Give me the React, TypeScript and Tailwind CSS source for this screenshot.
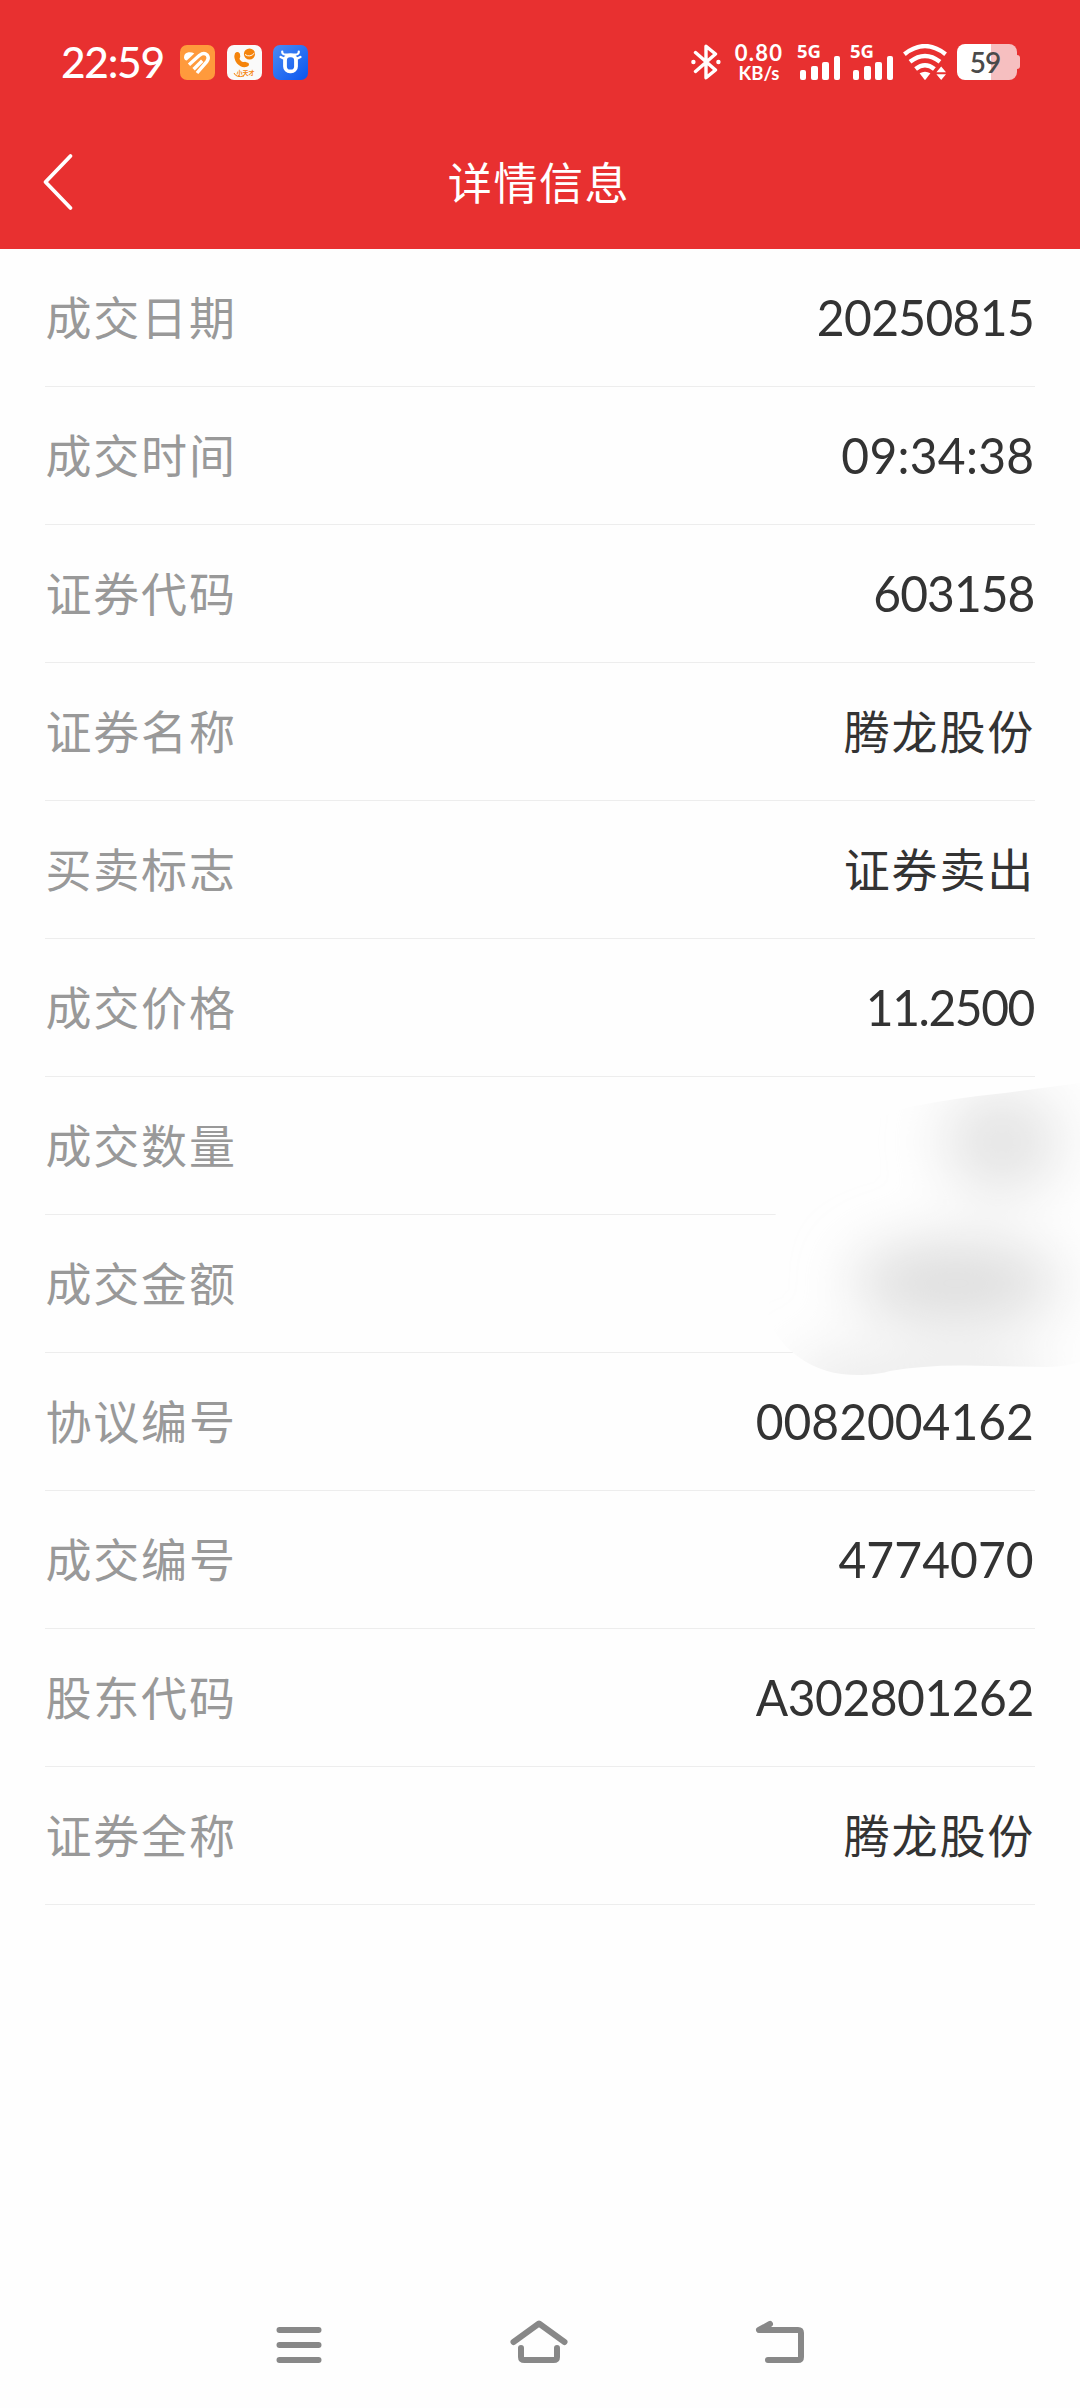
interface DetailRow {
  label: string;
  value: string;
  tracking: string;
}

const NUM = "font-[Lato,'Noto_Sans_CJK_SC',sans-serif] text-[51px] origin-right scale-x-[0.94] -translate-x-px -translate-y-px";
const CJK = "font-['Noto_Sans_CJK_SC',sans-serif] text-[46px] tracking-[1.8px] -translate-y-[3px]";

const rows: DetailRow[] = [
  { label: '成交日期', value: '20250815', tracking: 'tracking-[-0.7px]' },
  { label: '成交时间', value: '09:34:38', tracking: 'tracking-[0.3px]' },
  { label: '证券代码', value: '603158', tracking: 'tracking-[-1px]' },
  { label: '证券名称', value: '腾龙股份', tracking: '' },
  { label: '买卖标志', value: '证券卖出', tracking: '' },
  { label: '成交价格', value: '11.2500', tracking: 'tracking-[-1.5px]' },
  { label: '成交数量', value: '', tracking: '' },
  { label: '成交金额', value: '', tracking: '' },
  { label: '协议编号', value: '0082004162', tracking: 'tracking-[0px]' },
  { label: '成交编号', value: '4774070', tracking: 'tracking-[0.1px]' },
  { label: '股东代码', value: 'A302801262', tracking: 'tracking-[-0.5px]' },
  { label: '证券全称', value: '腾龙股份', tracking: '' },
];

const HeartAppIcon = () => (
  <svg width="35" height="35" viewBox="0 0 35 35">
    <rect width="35" height="35" rx="7" fill="#ff9a3c" />
    <path d="M4 13 Q3.800 8 8.500 7.200 Q12 6.800 14.300 8.600 L6.800 15.600 Q4.600 15.500 4 13Z" fill="#fff" />
    <g fill="none" stroke="#fff" strokeWidth="3.4" strokeLinejoin="round">
      <path d="M9 19.800 L19.500 10.300 Q24 7 27.200 10 Q29.600 13.200 26.800 16.600 L17 28" />
      <path d="M13.600 24.200 L22.200 15.800" />
    </g>
  </svg>
);

const PhoneAppIcon = () => (
  <svg width="35" height="35" viewBox="0 0 35 35">
    <rect width="35" height="35" rx="7" fill="#fafafa" />
    <circle cx="22.5" cy="9" r="5.6" fill="#f5840c" />
    <path d="M18 9.5 Q23 13 27.5 8" stroke="#fff" strokeWidth="1" fill="none" />
    <path
      d="M8 8.200 Q10.500 5.800 12.800 8.500 L13.300 11.500 Q11.800 13.500 13.600 15.600 Q15.500 17.800 18 16.800 L21.500 18 Q23 20.500 20 21.800 Q14.500 23.400 10 18.500 Q6 13 8 8.200Z"
      fill="#f5840c"
    />
    <path d="M7 28 Q9 33 17 31" stroke="#f5840c" strokeWidth="1" fill="none" />
    <text x="9.5" y="29.6" fontSize="6" fontWeight="700" fill="#f5840c" fontFamily="Noto Sans CJK SC, sans-serif">
      小天才
    </text>
  </svg>
);

const BullAppIcon = () => (
  <svg width="35" height="35" viewBox="0 0 35 35">
    <defs>
      <linearGradient id="bull" x1="0" y1="0" x2="1" y2="1">
        <stop offset="0" stopColor="#4a8cf5" />
        <stop offset="1" stopColor="#0a55ee" />
      </linearGradient>
    </defs>
    <rect width="35" height="35" rx="7" fill="url(#bull)" />
    <g fill="none" stroke="#fff" strokeLinecap="round" strokeLinejoin="round">
      <rect x="12" y="10.4" width="11" height="16" rx="5" strokeWidth="3.8" />
      <path d="M9.200 6.500 Q9 9.400 12.500 9.600 H22.500 Q26 9.400 25.800 6.500" strokeWidth="2.2" />
      <path d="M7.600 12 L11 13.600 M27.400 12 L24 13.600" strokeWidth="2.400" />
    </g>
  </svg>
);

const BluetoothIcon = () => (
  <svg width="30" height="36" viewBox="0 0 30 36">
    <path
      d="M4.5 8.500 L24.5 26 L15 33.8 V2.200 L24.5 10 L4.5 27.500"
      fill="none"
      stroke="#fff"
      strokeWidth="3.4"
      strokeLinecap="round"
      strokeLinejoin="round"
    />
    <circle cx="2.4" cy="18" r="2.2" fill="#fff" />
    <circle cx="27.4" cy="18" r="2.2" fill="#fff" />
  </svg>
);

const Signal = () => (
  <div className="relative flex h-9 w-[42px] items-end justify-end gap-[4.7px]">
    <span className="absolute -top-[3px] -left-px font-['Noto_Sans',sans-serif] text-[18.5px] leading-[20px] font-bold">5G</span>
    <span className="h-[10px] w-[6.5px] rounded-[2px] bg-white" />
    <span className="h-[14px] w-[6.5px] rounded-[2px] bg-white" />
    <span className="h-[18px] w-[6.5px] rounded-[2px] bg-white" />
    <span className="h-[24px] w-[6.5px] rounded-[2px] bg-white" />
  </div>
);

const WifiIcon = () => (
  <svg width="44" height="36" viewBox="0 0 44 36">
    <g fill="none" stroke="#fff" strokeWidth="4.4" strokeLinecap="butt">
      <path d="M1.4 10.2 Q22 -6 42.6 10.2" />
      <path d="M7 17.8 Q22 6 37 17.8" />
      <path d="M12.6 25 Q22 17.4 31.4 25" />
    </g>
    <path d="M16.6 29.2 Q22 26.2 27.4 29.2 L22.6 35.6 Q22 36.2 21.4 35.6Z" fill="#fff" />
    <path d="M38.2 22.5 L43 28.3 H33.4Z M33.4 30.3 H43 L38.2 36Z" fill="#fff" />
  </svg>
);

const Battery = () => (
  <div className="flex items-center">
    <div className="flex h-9 w-[60px] items-center justify-center overflow-hidden rounded-[8px] bg-linear-to-r from-white from-[57%] to-[#f6bfc0] to-[57%]">
      <span className="-translate-x-[2px] font-[Lato,sans-serif] text-[28px] leading-9 font-semibold tracking-[-1px] text-[#4a4a4a]">59</span>
    </div>
    <div className="h-[14px] w-[3px] rounded-r-[3px] bg-[#f6bfc0]" />
  </div>
);

const StatusBar = () => (
  <div className="flex h-[124px] items-center pr-[60px] pl-[61px] text-white">
    <span className="w-[119px] font-[Lato,sans-serif] text-[42.5px] leading-none font-medium tracking-[-1.3px]">22:59</span>
    <div className="flex gap-[11.5px]">
      <HeartAppIcon />
      <PhoneAppIcon />
      <BullAppIcon />
    </div>
    <div className="ml-auto flex items-center">
      <BluetoothIcon />
      <div className="ml-[11px] flex w-[54px] flex-col items-center font-[Lato,sans-serif] font-bold">
        <span className="text-[22px] leading-[21px] tracking-[1.2px]">0.80</span>
        <span className="text-[18.5px] leading-[20px]">KB/s</span>
      </div>
      <div className="ml-[12px] flex gap-[11px]">
        <Signal />
        <Signal />
      </div>
      <div className="ml-[10px]">
        <WifiIcon />
      </div>
      <div className="ml-[10px]">
        <Battery />
      </div>
    </div>
  </div>
);

const TitleBar = () => (
  <div className="grid h-[125px] grid-cols-[1fr_auto_1fr] items-center px-[42px] pb-[9px] text-white">
    <svg width="33" height="58" viewBox="0 0 33 58">
      <path d="M28.5 3 L3.5 29 L28.5 55" fill="none" stroke="#fff" strokeWidth="3.8" strokeLinecap="round" strokeLinejoin="round" />
    </svg>
    <h1 className="-translate-x-px -translate-y-px font-['Noto_Sans_CJK_SC',sans-serif] text-[44px] leading-none tracking-[1.6px]">
      详情信息
    </h1>
  </div>
);

// smudge brushed over the hidden quantity and amount
const Smudge = () => (
  <svg className="absolute top-[1060px] right-0" width="340" height="340" viewBox="0 0 340 340">
    <defs>
      <clipPath id="smudge">
        <path d="M340 23 L265 33 Q215 38 175 46 Q150 51 133 62 L60 122 Q36 130 36 150 L28 255 Q36 282 60 298 Q85 316 122 315 Q140 314 150 311 Q185 305 225 305.500 L305 307 Q325 307 340 302Z" />
      </clipPath>
      <filter id="soft" x="-100%" y="-100%" width="300%" height="300%">
        <feGaussianBlur stdDeviation="29" />
      </filter>
    </defs>
    <g clipPath="url(#smudge)">
      <rect width="340" height="340" fill="#fefefe" />
      <g filter="url(#soft)">
        <ellipse cx="262" cy="82" rx="58" ry="52" fill="#e4e4e4" />
        <ellipse cx="216" cy="223" rx="104" ry="42" fill="#dedede" />
        <rect x="60" y="300" width="240" height="45" fill="#e6e6e6" />
      </g>
    </g>
  </svg>
);

const NavBar = () => (
  <div className="flex h-[126px] items-center justify-center gap-[186px]">
    <svg width="48" height="50" viewBox="0 0 48 50" fill="none" stroke="#888" strokeWidth="6" strokeLinecap="round">
      <path d="M4.500 10 H43.500 M4.500 25 H43.500 M4.500 40 H43.500" />
    </svg>
    <svg width="60" height="50" viewBox="0 0 60 50" fill="none" stroke="#888" strokeWidth="6" strokeLinecap="round" strokeLinejoin="round">
      <path d="M4.500 22 L30 3.500 L55.500 22" />
      <path d="M12 28 V37 Q12 40 15.500 40 H44.500 Q48 40 48 37 V28" />
    </svg>
    <svg width="50" height="50" viewBox="0 0 50 50" fill="none" stroke="#888" strokeWidth="6" strokeLinecap="round" strokeLinejoin="round">
      <path d="M15 4 L4 10 H43 Q46 10 46 13 V37 Q46 40 43 40 H13" />
    </svg>
  </div>
);

const App = () => {
  return (
    <div className="relative flex h-[2408px] w-[1080px] flex-col bg-[#fefefe]">
      <header className="bg-[#e83030]">
        <StatusBar />
        <TitleBar />
      </header>

      <main className="flex-1 px-[45px]">
        {rows.map((row) => (
          <div key={row.label} className="flex h-[138px] items-center justify-between border-b border-[#ededed] leading-none">
            <span className="translate-x-[0.5px] -translate-y-[3px] font-['Noto_Sans_CJK_SC',sans-serif] text-[46px] tracking-[1.8px] text-[#999]">
              {row.label}
            </span>
            <span className={`text-[#333] ${row.tracking ? `${NUM} ${row.tracking}` : CJK}`}>{row.value}</span>
          </div>
        ))}
      </main>

      <NavBar />
      <Smudge />
    </div>
  );
};

export default App;
